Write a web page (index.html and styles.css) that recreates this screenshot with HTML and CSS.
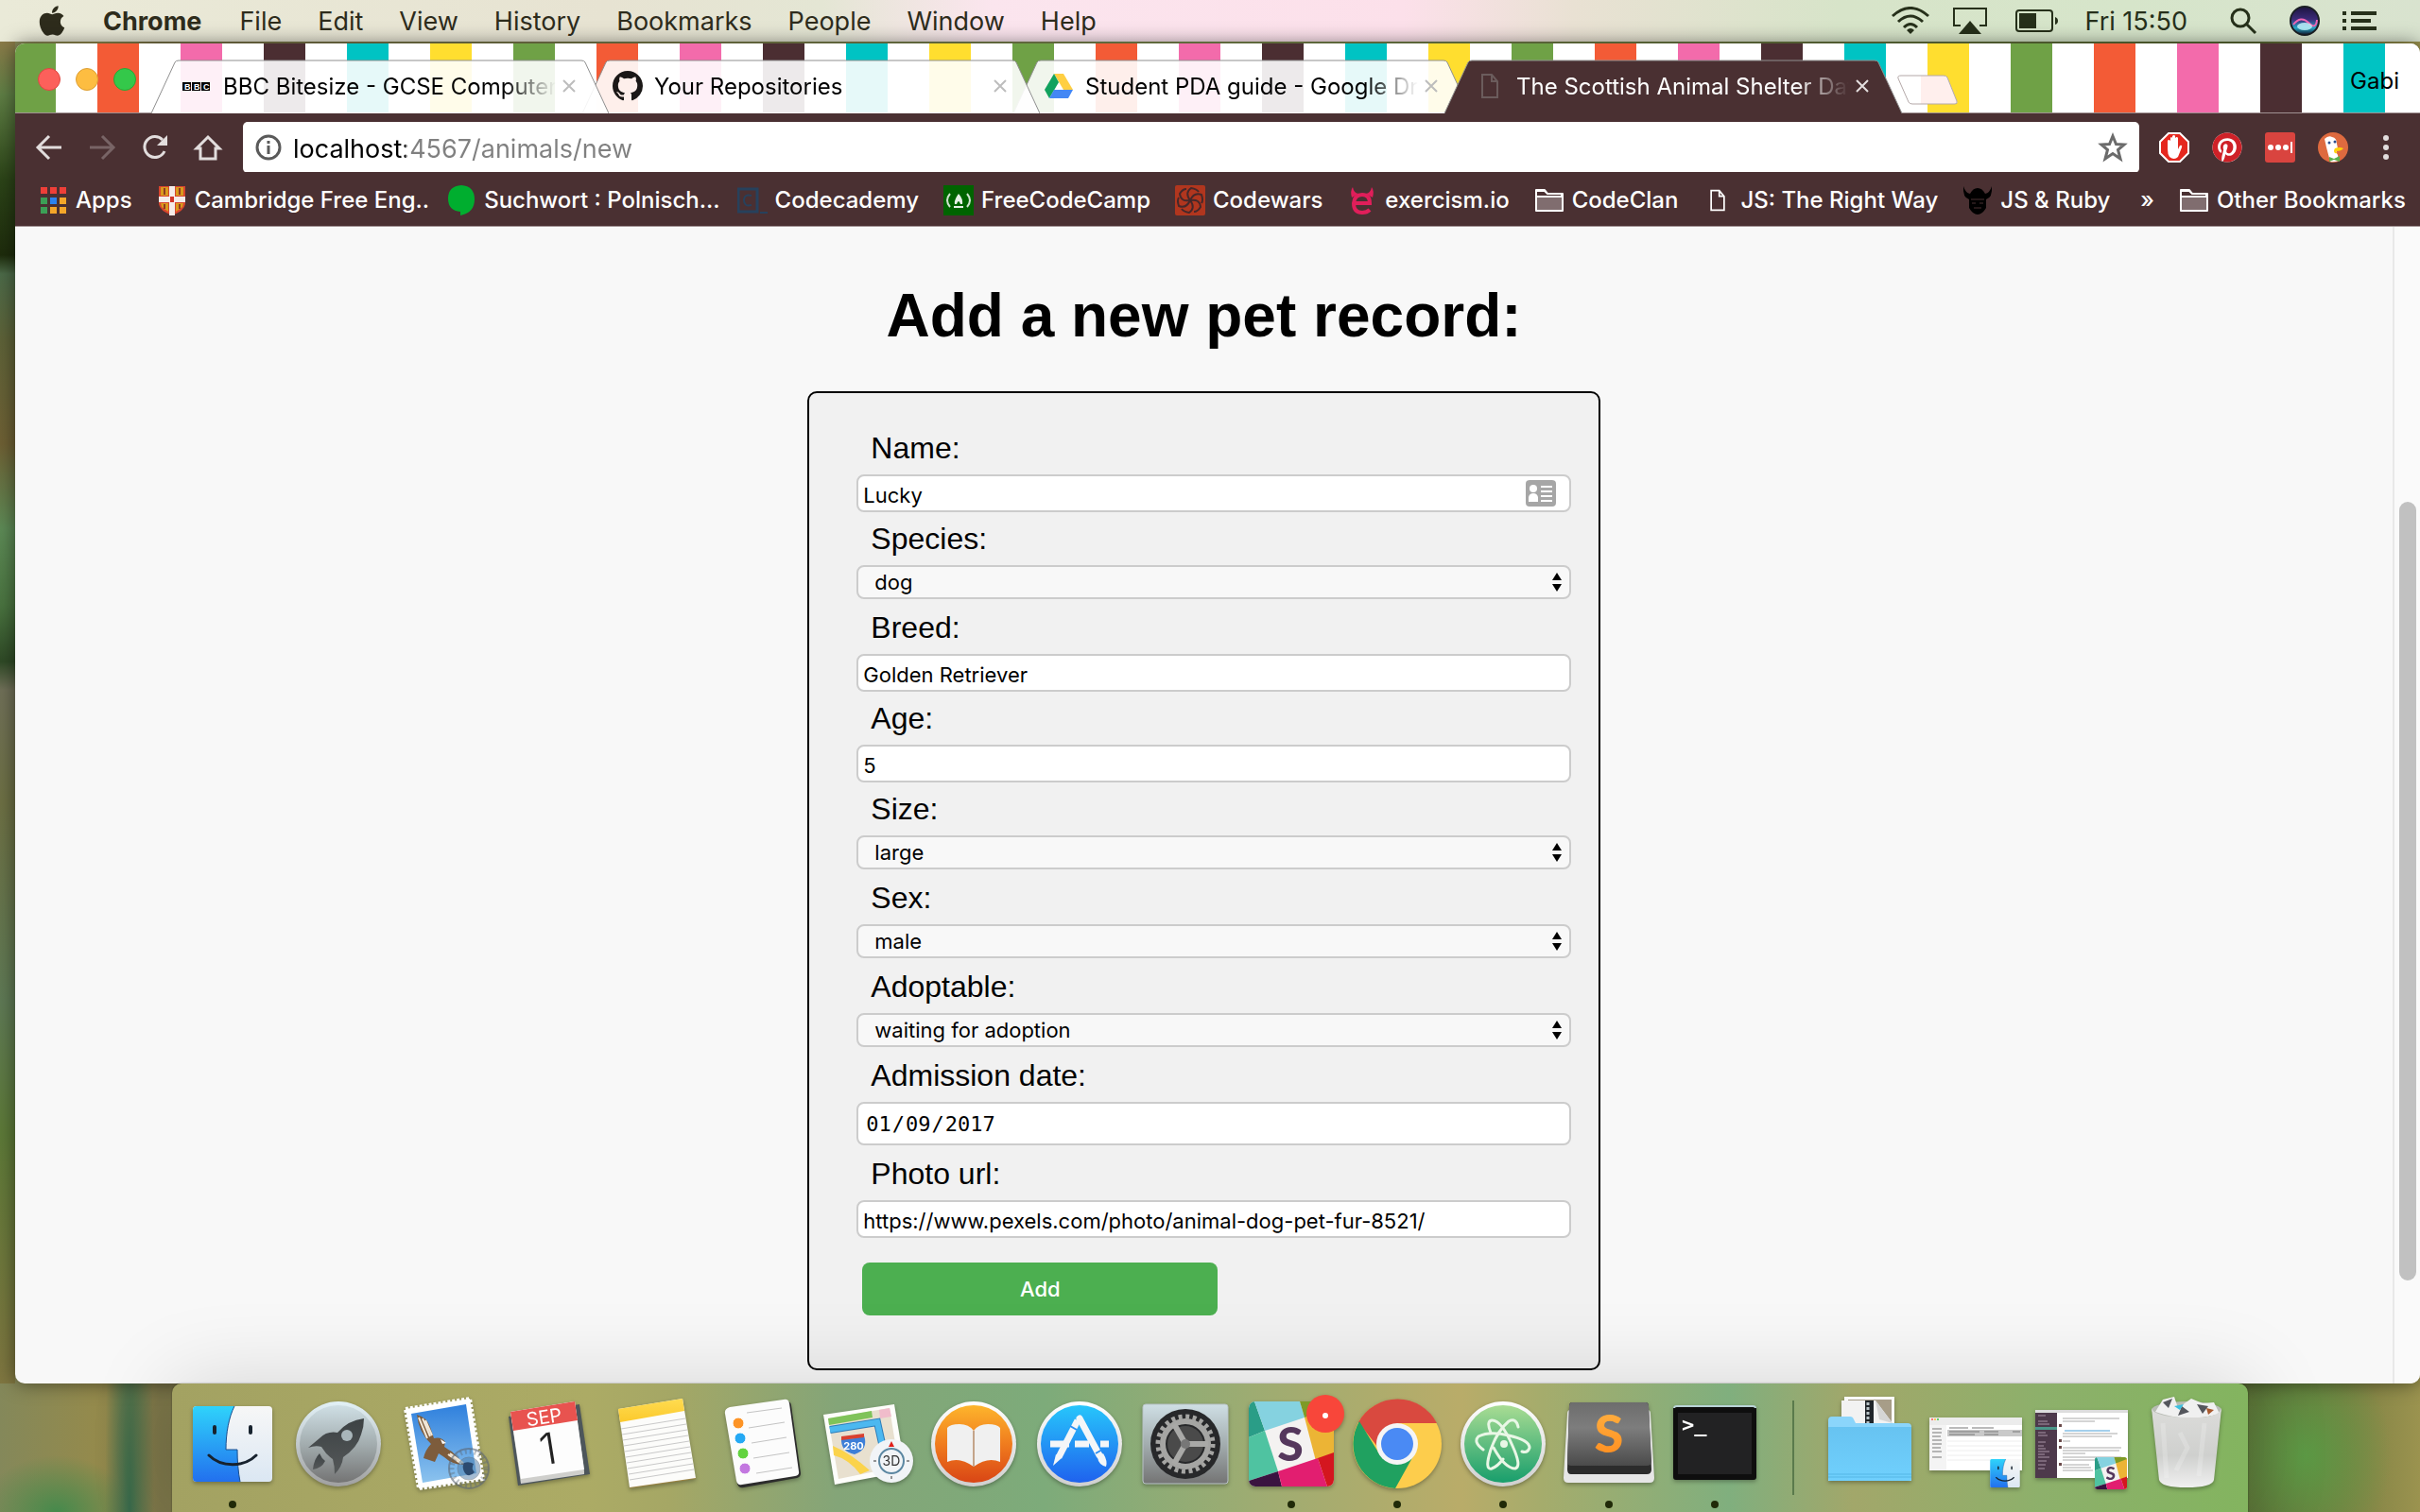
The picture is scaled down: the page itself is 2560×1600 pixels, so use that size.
FILE: index.html
```html
<!DOCTYPE html>
<html lang="en">
<head>
<meta charset="utf-8">
<title>The Scottish Animal Shelter Database</title>
<link rel="stylesheet" href="styles.css">
</head>
<body class="desktop">

<svg class="defs" aria-hidden="true">
  <defs>
    <linearGradient id="gFinderL" x1="0" y1="0" x2="0" y2="1"><stop offset="0" stop-color="#2fd3fb"/><stop offset="1" stop-color="#2270ee"/></linearGradient>
    <linearGradient id="gFinderR" x1="0" y1="0" x2="0" y2="1"><stop offset="0" stop-color="#f7f7f7"/><stop offset="1" stop-color="#dbe7f3"/></linearGradient>
    <linearGradient id="gSteel" x1="0" y1="0" x2="0" y2="1"><stop offset="0" stop-color="#cfdfe5"/><stop offset=".5" stop-color="#a3adaf"/><stop offset="1" stop-color="#747474"/></linearGradient>
    <linearGradient id="gSteelRim" x1="0" y1="0" x2="0" y2="1"><stop offset="0" stop-color="#e2f1f7"/><stop offset="1" stop-color="#a0a0a0"/></linearGradient>
    <linearGradient id="gRim" x1="0" y1="0" x2="0" y2="1"><stop offset="0" stop-color="#ffffff"/><stop offset="1" stop-color="#cfcfcf"/></linearGradient>
    <linearGradient id="gRocket" x1="0" y1="0" x2="0" y2="1"><stop offset="0" stop-color="#3c4244"/><stop offset="1" stop-color="#555859"/></linearGradient>
    <linearGradient id="gSky" x1="0" y1="0" x2="0" y2="1"><stop offset="0" stop-color="#2f80dd"/><stop offset="1" stop-color="#8cc3ee"/></linearGradient>
    <linearGradient id="gYellow" x1="0" y1="0" x2="0" y2="1"><stop offset="0" stop-color="#ffdc51"/><stop offset="1" stop-color="#fbc92c"/></linearGradient>
    <linearGradient id="gBooks" x1="0" y1="0" x2="0" y2="1"><stop offset="0" stop-color="#fdb52c"/><stop offset=".5" stop-color="#f07c1e"/><stop offset="1" stop-color="#d94515"/></linearGradient>
    <linearGradient id="gStore" x1="0" y1="0" x2="0" y2="1"><stop offset="0" stop-color="#27c6fb"/><stop offset="1" stop-color="#1f62ee"/></linearGradient>
    <linearGradient id="gAtom" x1="0" y1="0" x2="0" y2="1"><stop offset="0" stop-color="#a9dc93"/><stop offset="1" stop-color="#189e6c"/></linearGradient>
    <linearGradient id="gSubl" x1="0" y1="0" x2="0" y2="1"><stop offset="0" stop-color="#6d6d6d"/><stop offset=".4" stop-color="#7d7d7d"/><stop offset="1" stop-color="#4b4b4b"/></linearGradient>
    <linearGradient id="gOrange" x1="0" y1="0" x2="0" y2="1"><stop offset="0" stop-color="#ffb545"/><stop offset="1" stop-color="#ff8a1c"/></linearGradient>
    <linearGradient id="gFolder" x1="0" y1="0" x2="0" y2="1"><stop offset="0" stop-color="#67c3f1"/><stop offset="1" stop-color="#70d0fd"/></linearGradient>
    <linearGradient id="gTrash" x1="0" y1="0" x2="0" y2="1"><stop offset="0" stop-color="#dcdcda"/><stop offset=".6" stop-color="#cfd0ce"/><stop offset="1" stop-color="#f0f0f0"/></linearGradient>
    <linearGradient id="gSiri" x1="0" y1="0" x2="0" y2="1"><stop offset="0" stop-color="#1d1440"/><stop offset=".45" stop-color="#3b2a78"/><stop offset=".75" stop-color="#27a9c9"/><stop offset="1" stop-color="#15162c"/></linearGradient>
  </defs>
  <symbol id="finder" viewBox="0 0 84 80">
    <rect width="84" height="80" rx="4" fill="url(#gFinderR)"/>
    <path d="M4 0H44C38 12 35 28 35 46H47C47 58 48 70 50 80H4A4 4 0 0 1 0 76V4A4 4 0 0 1 4 0Z" fill="url(#gFinderL)"/>
    <path d="M44 0C38 12 35 28 35 46H47C47 58 48 70 50 80" fill="none" stroke="#1a4f8f" stroke-width="1"/>
    <path d="M23 22V28M61 22V28" stroke="#17222e" stroke-width="4" stroke-linecap="round"/>
    <path d="M17 52C30 65 54 65 67 52" fill="none" stroke="#17222e" stroke-width="3" stroke-linecap="round"/>
  </symbol>
  <symbol id="slack" viewBox="0 0 90 90">
    <clipPath id="cSlack"><rect width="90" height="90" rx="7"/></clipPath>
    <g clip-path="url(#cSlack)">
      <rect width="90" height="90" fill="#f4f2f1"/>
      <path d="M0 0H6L17 31L0 38Z" fill="#2a9d87"/>
      <path d="M6 0H54L59 17L17 31Z" fill="#85d2e0"/>
      <path d="M54 0H90V14L59 17Z" fill="#7e9a26"/>
      <path d="M59 17L90 5V55L71 63Z" fill="#ecb435"/>
      <path d="M0 38L17 31L31 74L0 84Z" fill="#4fc3a1"/>
      <path d="M0 84L31 74L35 90H0Z" fill="#3a1340"/>
      <path d="M31 74L73 60L83 90H35Z" fill="#e21e70"/>
      <path d="M73 60L90 54V90H83Z" fill="#d4161f"/>
      <text x="44" y="63" class="slack-s">S</text>
    </g>
  </symbol>
  <symbol id="folder" viewBox="0 0 32 26">
    <path d="M2 24V2H11L14 6H30V24Z" fill="#806d6f" stroke="#fff" stroke-width="2" stroke-linejoin="round"/>
    <path d="M2 3H11L14 6H29V9H2Z" fill="#4a3032" stroke="#fff" stroke-width="2"/>
  </symbol>
  <symbol id="page" viewBox="0 0 20 28">
    <path d="M2 2H12L18 9V26H2ZM12 2V9H18" fill="none" stroke="currentColor" stroke-width="2"/>
  </symbol>
  <symbol id="tabshape" viewBox="0 0 484 57">
    <path d="M0 57L25 3Q26 1 29 1H455Q458 1 459 3L484 57" stroke="#8f8f8f" stroke-width="1"/>
  </symbol>
  <symbol id="cross" viewBox="0 0 16 16"><path d="M2 2L14 14M14 2L2 14" stroke="currentColor" stroke-width="2"/></symbol>
  <symbol id="arrows" viewBox="0 0 10 20"><path d="M5 0L10 8H0ZM5 20L0 12H10Z"/></symbol>
</svg>

<header class="menubar">
  <svg class="apple" viewBox="0 0 384 512"><path fill="currentColor" d="M318.7 268.7c-.2-36.7 16.4-64.4 50-84.8-18.8-26.9-47.2-41.7-84.7-44.6-35.5-2.8-74.3 20.7-88.5 20.7-15 0-49.4-19.7-76.4-19.7C63.3 141.2 4 184.8 4 273.5q0 39.3 14.4 81.2c12.8 36.7 59 126.7 107.2 125.2 25.2-.6 43-17.9 75.8-17.9 31.8 0 48.3 17.9 76.4 17.9 48.6-.7 90.4-82.5 102.6-119.3-65.2-30.7-61.7-90-61.7-91.9zm-56.6-164.2c27.3-32.4 24.8-61.9 24-72.5-24.1 1.4-52 16.4-67.9 34.9-17.5 19.8-27.8 44.3-25.6 71.9 26.1 2 49.9-11.4 69.5-34.3z"/></svg>
  <nav class="menus">
    <button class="menu menu-app">Chrome</button>
    <button class="menu">File</button>
    <button class="menu">Edit</button>
    <button class="menu">View</button>
    <button class="menu">History</button>
    <button class="menu">Bookmarks</button>
    <button class="menu">People</button>
    <button class="menu">Window</button>
    <button class="menu">Help</button>
  </nav>
  <div class="status">
    <svg class="wifi" viewBox="0 0 42 30"><g fill="none" stroke="currentColor" stroke-width="3"><path d="M2 10Q21 -7 40 10"/><path d="M8 16Q21 4 34 16"/><path d="M14 22Q21 15 28 22"/></g><path d="M17 25Q21 21 25 25L21 29Z" fill="currentColor"/></svg>
    <svg class="airplay" viewBox="0 0 36 30"><path d="M8 20H1V2H35V20H28" fill="none" stroke="currentColor" stroke-width="2"/><path d="M18 15L30 29H6Z" fill="currentColor"/></svg>
    <svg class="battery" viewBox="0 0 46 24"><rect x="1" y="1" width="38" height="22" rx="3" fill="none" stroke="currentColor" stroke-width="2"/><rect x="4" y="4" width="18" height="16" fill="currentColor"/><path d="M42 8Q45 9 45 12T42 16Z" fill="currentColor"/></svg>
    <span class="clock">Fri 15:50</span>
    <svg class="search" viewBox="0 0 30 30"><circle cx="12" cy="12" r="9" fill="none" stroke="currentColor" stroke-width="3"/><path d="M18 18L28 28" stroke="currentColor" stroke-width="3"/></svg>
    <svg class="siri" viewBox="0 0 32 32"><circle cx="16" cy="16" r="15" fill="url(#gSiri)" stroke="#1b1f24" stroke-width="2"/><path d="M4 20Q12 10 20 18T29 15" fill="none" stroke="#f065b4" stroke-width="2"/><ellipse cx="16" cy="22" rx="8" ry="4" fill="#c9f7ff" opacity=".8"/></svg>
    <svg class="list" viewBox="0 0 36 20"><path d="M0 2H4M0 10H4M0 18H4M9 2H36M9 10H30M9 18H36" stroke="currentColor" stroke-width="4"/></svg>
  </div>
</header>

<section class="browser">
  <div class="tabstrip">
    <div class="lights">
      <button class="light light-close" aria-label="Close window"></button>
      <button class="light light-min" aria-label="Minimise window"></button>
      <button class="light light-max" aria-label="Zoom window"></button>
    </div>
    <div class="tabs">
      <div class="tab tab-1">
        <svg class="tab-bg"><use href="#tabshape"/></svg>
        <svg class="favicon" viewBox="0 0 32 32"><path d="M1 12H10V21H1ZM11 12H20V21H11ZM21 12H30V21H21Z"/><g class="bbc"><text x="3" y="20">B</text><text x="13" y="20">B</text><text x="23" y="20">C</text></g></svg>
        <span class="tab-title">BBC Bitesize - GCSE Computer Science</span>
        <button class="tab-close" aria-label="Close tab"><svg viewBox="0 0 16 16"><use href="#cross"/></svg></button>
      </div>
      <div class="tab tab-2">
        <svg class="tab-bg"><use href="#tabshape"/></svg>
        <svg class="favicon" viewBox="0 0 16 16"><path fill="#1b1817" d="M8 0C3.58 0 0 3.58 0 8c0 3.54 2.29 6.53 5.47 7.59.4.07.55-.17.55-.38 0-.19-.01-.82-.01-1.49-2.01.37-2.53-.49-2.69-.94-.09-.23-.48-.94-.82-1.13-.28-.15-.68-.52-.01-.53.63-.01 1.08.58 1.23.82.72 1.21 1.87.87 2.33.66.07-.52.28-.87.51-1.07-1.78-.2-3.64-.89-3.64-3.95 0-.87.31-1.59.82-2.15-.08-.2-.36-1.02.08-2.12 0 0 .67-.21 2.2.82.64-.18 1.32-.27 2-.27.68 0 1.36.09 2 .27 1.53-1.04 2.2-.82 2.2-.82.44 1.1.16 1.92.08 2.12.51.56.82 1.27.82 2.15 0 3.07-1.87 3.75-3.65 3.95.29.25.54.73.54 1.48 0 1.07-.01 1.93-.01 2.2 0 .21.15.46.55.38A8.013 8.013 0 0016 8c0-4.42-3.58-8-8-8z"/></svg>
        <span class="tab-title">Your Repositories</span>
        <button class="tab-close" aria-label="Close tab"><svg viewBox="0 0 16 16"><use href="#cross"/></svg></button>
      </div>
      <div class="tab tab-3">
        <svg class="tab-bg"><use href="#tabshape"/></svg>
        <svg class="favicon" viewBox="0 0 32 32"><path d="M11 3H21L31 20H21Z" fill="#ffcf42"/><path d="M11 3L16 12L6 29L1 20Z" fill="#11a25e"/><path d="M11 20H31L26 29H6Z" fill="#4387f4"/></svg>
        <span class="tab-title">Student PDA guide - Google Drive</span>
        <button class="tab-close" aria-label="Close tab"><svg viewBox="0 0 16 16"><use href="#cross"/></svg></button>
      </div>
      <div class="tab tab-4 tab-active">
        <svg class="tab-bg"><use href="#tabshape"/></svg>
        <svg class="favicon" viewBox="0 0 32 32"><use href="#page" x="6" y="2" width="20" height="28"/></svg>
        <span class="tab-title">The Scottish Animal Shelter Database</span>
        <button class="tab-close" aria-label="Close tab"><svg viewBox="0 0 16 16"><use href="#cross"/></svg></button>
      </div>
    </div>
    <button class="newtab" aria-label="New tab"><svg viewBox="0 0 66 32"><path d="M5 1H50Q53 1 54 3L64 28Q65 31 62 31H17Q14 31 13 29L2 4Q1 1 5 1Z" fill="#fff"/><path d="M26 1H50Q53 1 54 3L64 28Q65 31 62 31H26Z" fill="#ffefed"/><path d="M5 1H50Q53 1 54 3L64 28Q65 31 62 31H17Q14 31 13 29L2 4Q1 1 5 1Z" fill="none" stroke="#b3a8a8"/></svg></button>
    <button class="profile">Gabi</button>
  </div>

  <div class="toolbar">
    <button class="tool" aria-label="Back"><svg viewBox="0 0 32 32"><path d="M29 16H5M16 4L4 16L16 28" /></svg></button>
    <button class="tool tool-off" aria-label="Forward"><svg viewBox="0 0 32 32"><path d="M3 16H27M16 4L28 16L16 28"/></svg></button>
    <button class="tool" aria-label="Reload"><svg viewBox="0 0 32 32"><path d="M26 20A11 11 0 1 1 24 8"/><path class="solid" d="M29 3V14H18Z"/></svg></button>
    <button class="tool" aria-label="Home"><svg viewBox="0 0 32 32"><path d="M8 17H4L16 5L28 17H24V28H8Z"/></svg></button>
    <div class="omnibox">
      <svg class="info" viewBox="0 0 28 28"><circle cx="14" cy="14" r="12" fill="none" stroke="#5a5a5a" stroke-width="3"/><path d="M14 12V21M14 7V10" stroke="#5a5a5a" stroke-width="3"/></svg>
      <input class="url" type="text" aria-label="Address" value="localhost:4567/animals/new">
      <svg class="star" viewBox="0 0 32 32"><path d="M16 4L19.500 12.500L28 13L21.500 18.500L24 28L16 22.500L8 28L10.500 18.500L4 13L12.500 12.500Z" fill="none" stroke="#6b6b6b" stroke-width="3"/></svg>
    </div>
    <div class="extensions">
      <svg viewBox="0 0 32 32"><path d="M10 1H22L31 10V22L22 31H10L1 22V10Z" fill="#e5281f" stroke="#fff" stroke-width="2"/><path d="M9 18V9Q10 7 12 9V6Q13 4 14 6V4Q16 2 17 4V6Q19 4 20 6V18L22 14Q25 13 24 16L20 26Q16 30 11 26Q9 23 9 18Z" fill="#fff"/></svg>
      <svg viewBox="-8 0 512 512"><circle cx="248" cy="256" r="248" fill="#fff"/><path fill="#cf2128" d="M496 256c0 137-111 248-248 248-25.600 0-50.200-3.900-73.400-11.100 10.100-16.500 25.200-43.500 30.800-65 3-11.600 15.400-59 15.400-59 8.100 15.400 31.700 28.500 56.800 28.500 74.800 0 128.700-68.800 128.700-154.300 0-81.900-66.900-143.200-152.900-143.200-107 0-163.900 71.800-163.900 150.100 0 36.400 19.400 81.700 50.300 96.100 4.700 2.200 7.200 1.200 8.300-3.300.8-3.400 5-20.300 6.900-28.100.6-2.500.3-4.700-1.700-7.100-10.100-12.500-18.300-35.300-18.300-56.600 0-54.700 41.400-107.600 112-107.600 60.900 0 103.600 41.500 103.600 100.900 0 67.100-33.900 113.600-78 113.600-24.300 0-42.600-20.100-36.700-44.800 7-29.500 20.500-61.300 20.500-82.600 0-19-10.200-34.900-31.400-34.900-24.900 0-44.900 25.700-44.900 60.200 0 22 7.400 36.800 7.400 36.800s-24.500 103.800-29 123.200c-5 21.400-3 51.600-.9 71.200C65.400 450.900 0 361.100 0 256 0 119 111 8 248 8s248 111 248 248z"/></svg>
      <svg viewBox="0 0 32 32"><rect width="32" height="32" rx="3" fill="#d9443f"/><g fill="#fff"><circle cx="6" cy="16" r="3"/><circle cx="14" cy="16" r="3"/><circle cx="22" cy="16" r="3"/><path d="M27 10H29V22H27Z"/></g></svg>
      <svg viewBox="0 0 32 32"><circle cx="16" cy="16" r="16" fill="#de6a3f"/><path d="M7 7Q11 3 15 5Q20 6 20 12L21 17Q18 20 21 24L22 30Q17 32 13 31L9 16Z" fill="#fff"/><path d="M18 17Q23 15 27 17Q25 20 19 20Q22 23 18 22Q16 20 18 17Z" fill="#fdd20a"/><circle cx="12" cy="11" r="1.500" fill="#2d4f8e"/><circle cx="18" cy="10" r="1.500" fill="#2d4f8e"/><path d="M12 26L17 28L23 25V31L17 29L12 31Z" fill="#5bb04c"/></svg>
      <button class="more" aria-label="Menu"><svg viewBox="0 0 8 28"><circle cx="4" cy="4" r="3"/><circle cx="4" cy="14" r="3"/><circle cx="4" cy="24" r="3"/></svg></button>
    </div>
  </div>

  <nav class="bookmarks">
    <a class="bm" href="#apps"><svg viewBox="0 0 32 32"><g fill="#ee3f38"><path d="M3 2h7v7H3zM13 2h7v7h-7zM23 2h7v7h-7z"/></g><g fill="#3c9f56"><path d="M3 13h7v7H3zM3 23h7v7H3z"/></g><path d="M13 13h7v7h-7z" fill="#2b82f0"/><path d="M23 13h7v7h-7zM13 23h7v7h-7zM23 23h7v7h-7z" fill="#f4a629"/></svg><span>Apps</span></a>
    <a class="bm bm-cut" href="#cambridge"><svg viewBox="0 0 32 32"><path d="M2 1H30V20Q29 27 16 32Q3 27 2 20Z" fill="#d8452e"/><path d="M4 2H12V11H4ZM20 2H28V11H20ZM4 19H12V28L5 23ZM20 19H28L27 23L20 28Z" fill="#d99b1d"/><path d="M8 3V10M24 3V10M8 20V25M24 20V25" stroke="#8e3a22" stroke-width="2"/><path d="M13 1H19V32H13ZM2 12H30V18H2Z" fill="#f5ece9"/><path d="M14 12H18V18H14Z" fill="#d23428"/></svg><span>Cambridge Free Eng..</span></a>
    <a class="bm bm-cut" href="#suchwort"><svg viewBox="0 0 32 32"><path d="M16 0Q30 1 30 15T15 32V28Q2 27 2 14T16 0Z" fill="#00ae2f"/></svg><span>Suchwort : Polnisch...</span></a>
    <a class="bm" href="#codecademy"><svg viewBox="0 0 32 32"><path d="M1 4H21V28H1Z" fill="none" stroke="#27415c" stroke-width="3"/><path d="M15 11Q7 9 7 16T15 21M24 29H32" fill="none" stroke="#27415c" stroke-width="2"/></svg><span>Codecademy</span></a>
    <a class="bm" href="#freecodecamp"><svg viewBox="0 0 32 32"><path d="M0 0H32V32H0Z" fill="#006400"/><path d="M7 9Q1 16 7 23M25 9Q31 16 25 23" fill="none" stroke="#cfe3cf" stroke-width="2"/><path d="M16 9Q21 14 20 20H18Q17 17 16 17T14 20H12Q11 16 16 9ZM11 22H21V24H11Z" fill="#e6f0e6"/></svg><span>FreeCodeCamp</span></a>
    <a class="bm" href="#codewars"><svg viewBox="0 0 32 32"><rect width="32" height="32" rx="2" fill="#b1361e"/><g fill="none" stroke="#45282a" stroke-width="2"><path d="M16 16Q10 8 17 3Q23 4 25 7"/><path d="M16 16Q20 7 28 10Q30 16 28 19"/><path d="M16 16Q26 14 27 23Q24 28 20 28"/><path d="M16 16Q22 24 15 29Q9 28 7 25"/><path d="M16 16Q12 25 4 22Q2 16 4 13"/><path d="M16 16Q6 18 5 9Q8 4 12 4"/></g></svg><span>Codewars</span></a>
    <a class="bm" href="#exercism"><svg viewBox="0 0 32 32"><path d="M7 19H24Q24 10 16 10T7 19Q7 29 16 29Q21 29 24 26" fill="none" stroke="#e01e5a" stroke-width="4"/><path d="M5 13Q3 6 6 2Q7 8 12 9ZM27 13Q29 6 26 2Q25 8 20 9Z" fill="#e01e5a"/></svg><span>exercism.io</span></a>
    <a class="bm" href="#codeclan"><svg viewBox="0 0 32 26"><use href="#folder"/></svg><span>CodeClan</span></a>
    <a class="bm" href="#rightway"><svg viewBox="0 0 32 32"><use href="#page" x="7" y="4" width="18" height="24"/></svg><span>JS: The Right Way</span></a>
    <a class="bm" href="#jsruby"><svg viewBox="0 0 32 32"><path d="M1 1Q3 8 8 9Q11 3 16 3T24 9Q29 8 31 1Q32 13 25 15V24Q21 31 16 31T7 24V15Q0 13 1 1Z"/><path d="M9 15H23M10 19H14M18 19H22M12 24H20" stroke="#4a3032" stroke-width="1"/></svg><span>JS &amp; Ruby</span></a>
    <button class="overflow" aria-label="More bookmarks">»</button>
    <a class="bm bm-other" href="#other"><svg viewBox="0 0 32 26"><use href="#folder"/></svg><span>Other Bookmarks</span></a>
  </nav>

  <div class="viewport">
    <main class="page">
      <h1 class="title">Add a new pet record:</h1>
      <form class="record">
        <label for="name">Name:</label>
        <div class="control"><input class="text" id="name" type="text" value="Lucky">
          <svg class="card" viewBox="0 0 32 28"><rect width="32" height="28" rx="4" fill="#a6a6a6"/><g fill="#fff"><circle cx="8" cy="9" r="4"/><path d="M3 23V18Q4 14 8 14T13 18V23ZM16 6H28V8H16ZM16 11H28V13H16ZM16 16H28V18H16ZM16 21H28V23H16Z"/></g></svg></div>
        <label for="species">Species:</label>
        <div class="control"><select id="species"><option>dog</option><option>cat</option></select><svg class="arrows" viewBox="0 0 10 20"><use href="#arrows"/></svg></div>
        <label for="breed">Breed:</label>
        <div class="control"><input class="text" id="breed" type="text" value="Golden Retriever"></div>
        <label for="age">Age:</label>
        <div class="control"><input class="text" id="age" type="text" value="5"></div>
        <label for="size">Size:</label>
        <div class="control"><select id="size"><option>large</option><option>small</option></select><svg class="arrows" viewBox="0 0 10 20"><use href="#arrows"/></svg></div>
        <label for="sex">Sex:</label>
        <div class="control"><select id="sex"><option>male</option><option>female</option></select><svg class="arrows" viewBox="0 0 10 20"><use href="#arrows"/></svg></div>
        <label for="adoptable">Adoptable:</label>
        <div class="control"><select id="adoptable"><option>waiting for adoption</option><option>adopted</option></select><svg class="arrows" viewBox="0 0 10 20"><use href="#arrows"/></svg></div>
        <label for="admission">Admission date:</label>
        <div class="control"><input class="date" id="admission" type="date" value="2017-01-09"></div>
        <label for="photo">Photo url:</label>
        <div class="control"><input class="text" id="photo" type="text" value="https://www.pexels.com/photo/animal-dog-pet-fur-8521/"></div>
        <button class="add" type="submit">Add</button>
      </form>
    </main>
    <div class="scrollbar"><div class="thumb"></div></div>
  </div>
</section>

<footer class="dockrow">
  <div class="dock">
    <div class="app app-on"><svg viewBox="0 0 112 112"><use href="#finder" x="14" y="16" width="84" height="80"/></svg></div>
    <div class="app"><svg viewBox="0 0 112 112"><circle cx="56" cy="56" r="45" fill="url(#gSteelRim)"/><circle cx="56" cy="56" r="41" fill="url(#gSteel)"/><path d="M83 29Q66 31 55 44Q44 42 36 50L24 60Q32 57 38 59L43 66Q47 70 50 72Q52 79 52 88Q60 80 61 70Q76 60 80 46Q83 38 83 29Z" fill="url(#gRocket)"/><path d="M36 66Q30 72 29 83Q38 82 42 74Q38 71 36 66Z" fill="url(#gRocket)"/><circle cx="65" cy="47" r="6" fill="#a9b6ba"/></svg></div>
    <div class="app"><svg viewBox="0 0 112 112"><path d="M15 19L83 8L97 93L29 103Z" fill="#fff" stroke="#fff" stroke-width="4" stroke-dasharray="3 2"/><path d="M21 24L79 14L90 87L33 97Z" fill="url(#gSky)"/><path d="M27 25Q38 28 41 38L45 50Q53 48 57 54L56 59Q60 62 64 64L78 78Q66 79 56 70L50 66L46 75L34 71Q36 62 42 56Q29 44 27 25Z" fill="#7d5c3c"/><path d="M29 28L38 50M33 29L41 48M36 31L43 47M60 67L74 77M62 66L76 76" stroke="#f0e6d6" stroke-width="2" fill="none"/><path d="M52 51L58 55L54 56Z" fill="#fff"/><circle cx="82" cy="82" r="21" fill="none" stroke="#5b6673" stroke-width="2" opacity=".6"/><circle cx="82" cy="82" r="18" fill="none" stroke="#5b6673" stroke-width="5" stroke-dasharray="2 3" opacity=".4"/><circle cx="82" cy="82" r="12" fill="#4d7ca8" opacity=".5" stroke="#5b6673"/><path d="M77 76Q82 74 87 77Q84 82 88 86Q82 92 78 87Q74 81 77 76Z" fill="#2c4a70"/></svg></div>
    <div class="app"><svg viewBox="0 0 112 112"><path d="M12 27L87 14L98 88L22 100Z" fill="#4d565b"/><path d="M14 22L82 11L92 85L92 88L25 98Z" fill="#cfcfcc"/><path d="M14 22L82 11L92 83L25 93Z" fill="#fdfdfd"/><path d="M14 22L82 11L85 31L17 42Z" fill="#e8534f"/><g transform="rotate(-9 56 56)"><text x="54" y="34" class="cal-month">SEP</text><text x="53" y="77" class="cal-day">1</text></g></svg></div>
    <div class="app"><svg viewBox="0 0 112 112"><path d="M28 103L98 93V90L28 100Z" fill="#9b8342"/><path d="M16 19L84 8L98 92L28 102Z" fill="#fcfcfa"/><path d="M16 19L84 8L86 21L18 33Z" fill="url(#gYellow)"/><g stroke="#c9c9c9" stroke-width="1"><path d="M19 40L87 29M20 46L88 35M21 52L89 41M22 58L90 47M23 64L91 53M24 70L92 59M25 76L93 65M26 82L94 71M27 88L95 77M28 94L96 83"/></g></svg></div>
    <div class="app"><svg viewBox="0 0 112 112"><path d="M24 19L80 11Q86 10 87 15L97 87Q97 91 93 92L37 102Q31 103 30 98L18 25Q18 20 24 19Z" fill="#2c2c2c"/><path d="M22 17L79 9Q84 8 85 13L95 85Q96 89 91 90L35 99Q30 100 29 95L17 24Q16 19 22 17Z" fill="#fcfcfc"/><g stroke="#fff" stroke-width="1"><circle cx="31" cy="34" r="6" fill="#fd9426"/><circle cx="33" cy="50" r="6" fill="#26a9f4"/><circle cx="36" cy="66" r="6" fill="#62d33f"/><circle cx="38" cy="82" r="6" fill="#c378e0"/></g><path d="M40 23L77 18M42 39L80 33M45 55L82 49M47 71L85 65M50 87L88 81" stroke="#c4c4c4" stroke-width="1"/></svg></div>
    <div class="app"><svg viewBox="0 0 112 112"><path d="M9 25L84 14L96 85L21 99Z" fill="#fdfdfb"/><path d="M14 29L79 18L89 80L25 93Z" fill="#e8e0cf"/><path d="M14 29L60 21L61 28L15 36Z" fill="#7fc35a"/><path d="M68 20L79 18L81 27L69 29Z" fill="#f0bccb"/><path d="M16 41L66 33L72 60" fill="none" stroke="#2c7cb8" stroke-width="8"/><path d="M16 41L66 33L72 60" fill="none" stroke="#4cb8f0" stroke-width="6"/><path d="M19 58Q38 66 58 84L48 88Q36 72 20 68Z" fill="#fbd34b"/><path d="M28 50Q40 52 52 47Q57 62 42 67Q27 64 28 50Z" fill="#3d7fd8"/><path d="M28 48L52 45V49L28 52Z" fill="#d8402f"/><text x="41" y="62" class="route">280</text><circle cx="81" cy="74" r="23" fill="#f1f4f7"/><circle cx="81" cy="74" r="13" fill="none" stroke="#5b87a2" stroke-width="2"/><path d="M81 53L84 59H78Z" fill="#e0201c"/><path d="M81 90V93M62 74H65M97 74H100" stroke="#333" stroke-width="1"/><text x="81" y="79" class="map3d">3D</text></svg></div>
    <div class="app"><svg viewBox="0 0 112 112"><circle cx="56" cy="56" r="45" fill="url(#gRim)"/><circle cx="56" cy="56" r="41" fill="url(#gBooks)"/><path d="M28 39Q31 35 41 35T56 42Q61 35 71 35T84 39V75Q71 69 56 80Q41 69 28 75Z" fill="#f0f0f0"/><path d="M56 42V80" stroke="#c4a48a" stroke-width="2"/></svg></div>
    <div class="app"><svg viewBox="0 0 112 112"><circle cx="56" cy="56" r="45" fill="url(#gRim)"/><circle cx="56" cy="56" r="41" fill="url(#gStore)"/><g stroke="#f4f6f8"><path d="M25 56H45M51 56H66M78 56H87" stroke-width="7"/><path d="M54 31L34 70" stroke-width="7"/><path d="M56 29L77 68" stroke-width="7" stroke-linecap="round"/></g><path d="M31 67L37 71L28 79ZM75 70L81 66Q86 74 84 80Q76 78 75 70Z" fill="#f4f6f8"/><path d="M46 37L53 41M73 66L80 62" stroke="#2b8ef4" stroke-width="2"/></svg></div>
    <div class="app"><svg viewBox="0 0 112 112"><rect x="11" y="14" width="90" height="84" rx="3" fill="url(#gSteel)" stroke="#b9c4c8"/><circle cx="56" cy="56" r="37" fill="#27282a"/><circle cx="56" cy="56" r="29" fill="none" stroke="#a5a5a3" stroke-width="5" stroke-dasharray="4 3.590"/><circle cx="56" cy="56" r="24" fill="none" stroke="#a5a5a3" stroke-width="6"/><circle cx="56" cy="56" r="19" fill="#4a4a4a"/><path d="M56 56H80M56 56L44 35M56 56L44 77" stroke="#a9a9a7" stroke-width="6"/><circle cx="56" cy="56" r="5" fill="#777"/></svg></div>
    <div class="app app-on"><svg viewBox="0 0 112 112"><use href="#slack" x="11" y="11" width="90" height="90"/><circle cx="92" cy="24" r="20" fill="#f8463a"/><circle cx="92" cy="26" r="3" fill="#fff"/></svg></div>
    <div class="app app-on"><svg viewBox="0 0 112 112"><circle cx="56" cy="56" r="47" fill="#fdcd4c"/><path d="M15 33A47 47 0 0 1 98 34H56V60H36Z" fill="#d9493f"/><path d="M16 32A47 47 0 0 0 54 103L74 67L38 68Z" fill="#20a160"/><circle cx="56" cy="56" r="22" fill="#f5f5f5"/><circle cx="56" cy="56" r="17" fill="#4a8af4"/></svg></div>
    <div class="app app-on"><svg viewBox="0 0 112 112"><circle cx="56" cy="56" r="45" fill="url(#gRim)"/><circle cx="56" cy="56" r="41" fill="url(#gAtom)"/><g fill="none" stroke="#e9f7e6" stroke-width="3" stroke-linecap="round"><path d="M72 38Q70 28 62 32Q50 42 43 62Q36 84 44 82Q50 80 56 72"/><path d="M43 44Q38 32 44 31Q54 30 66 58Q76 80 69 82Q58 82 46 60"/><path d="M35 62Q24 54 30 48Q42 42 62 47Q84 52 84 60Q82 66 76 64"/></g><circle cx="57" cy="56" r="4" fill="#e9f7e6"/></svg></div>
    <div class="app app-on"><svg viewBox="0 0 112 112"><path d="M15 20H97Q100 20 100 24L104 92Q104 97 99 97H13Q8 97 8 92L12 24Q12 20 15 20Z" fill="#e6e6e6"/><path d="M17 12H95Q98 12 98 16L101 83Q101 88 96 88H16Q12 88 12 83L14 16Q14 12 17 12Z" fill="#2c2c2c"/><path d="M17 12H95Q98 12 98 16L101 74Q101 79 96 79H16Q12 79 12 74L14 16Q14 12 17 12Z" fill="url(#gSubl)"/><text x="56" y="65" class="subl-s">S</text></svg></div>
    <div class="app app-on"><svg viewBox="0 0 112 112"><rect x="12" y="16" width="88" height="78" rx="3" fill="#0e0e0e"/><path d="M13 18Q13 16 16 16H96Q99 16 99 18" fill="none" stroke="#b9d3d6" stroke-width="2"/><rect x="17" y="23" width="78" height="65" fill="#222223"/><text x="21" y="43" class="prompt">&gt;_</text></svg></div>
    <div class="divider"></div>
    <div class="app"><svg viewBox="0 0 112 112"><path d="M29 6H82V40H29Z" fill="#fafafa"/><path d="M33 9H79V36H33Z" fill="#a79d88"/><path d="M26 10H62L80 34V44H26Z" fill="#f2f2f2"/><path d="M51 10H60V36H51Z" fill="#20252a"/><path d="M54 12V34" stroke="#b9c4c8" stroke-width="3" stroke-dasharray="3 2"/><path d="M62 10L80 34L66 30Z" fill="#d5d5d5"/><path d="M12 31Q12 27 16 27H35Q38 27 39 30L41 34H96Q100 34 100 38V95H12Z" fill="#8bd5fb"/><path d="M12 38H100V92Q100 95 97 95H15Q12 95 12 92Z" fill="url(#gFolder)"/><path d="M12 88H100M12 91H100" stroke="#55b7e6" stroke-width="1"/></svg></div>
    <div class="app"><svg viewBox="0 0 112 112"><rect x="7" y="28" width="98" height="56" fill="#fff"/><path d="M7 28H105V36H7Z" fill="#ececec"/><path d="M7 36H25V84H7Z" fill="#f4f4f4"/><path d="M26 41H105V48H26Z" fill="#c9c9c9"/><path d="M28 39H48M52 39H75M28 43H60M28 46H55M65 43H80M65 46H80M95 43H103M10 40H20M10 44H20M10 48H19M10 52H20M10 56H20M10 60H19M10 64H20M10 70H20" stroke="#777" stroke-width="1"/><path d="M26 53H105M26 58H105M26 63H105M26 68H105M26 73H105" stroke="#eee"/><g><circle cx="10" cy="30" r="1" fill="#f55"/><circle cx="13" cy="30" r="1" fill="#fb3"/><circle cx="16" cy="30" r="1" fill="#3c4"/></g><use href="#finder" x="71" y="72" width="32" height="30"/></svg></div>
    <div class="app"><svg viewBox="0 0 112 112"><rect x="7" y="20" width="98" height="72" fill="#fff"/><path d="M7 20H105V23H7Z" fill="#ddd"/><path d="M7 23H30V92H7Z" fill="#4d394b"/><path d="M7 38H30V41H7Z" fill="#4c9689"/><path d="M10 26H18M10 32H20M10 35H22M10 44H18M10 47H20M10 54H18M10 58H16M10 61H18M10 64H22M10 67H17M10 70H22M10 74H19M10 78H18M10 82H17" stroke="#a995a7" stroke-width="1"/><path d="M36 29H96M36 32H70M36 45H94M36 48H88M36 53H44M36 60H98M36 63H96M36 66H60M36 70H98M36 73H95M36 78H64M36 81H66M36 84H68" stroke="#aaa" stroke-width="1"/><path d="M38 42H86" stroke="#4aa0d8" stroke-width="1"/><path d="M32 35H35V38H32ZM32 51H35V54H32ZM32 58H35V61H32ZM32 76H35V79H32Z" fill="#6a4a4a"/><use href="#slack" x="70" y="70" width="34" height="34"/></svg></div>
    <div class="app"><svg viewBox="0 0 112 112"><ellipse cx="55" cy="20" rx="37" ry="9" fill="#b9bdb5"/><path d="M22 22L30 9L42 6L46 18L60 8L72 13L84 12L90 24Q56 34 22 22Z" fill="#f0f0f0"/><path d="M30 12L40 8L36 18ZM66 14L78 16L72 24ZM50 16L58 22L46 26Z" fill="#54565c"/><path d="M42 16L52 14L48 20Z" fill="#3cc0e0"/><path d="M76 18L84 20L78 25Z" fill="#a8592e"/><path d="M18 18Q20 27 55 28T92 18L84 94Q82 102 55 102T26 94Z" fill="url(#gTrash)"/><path d="M30 34L34 92M48 44L56 60L44 84M74 34L68 90" stroke="#fff" stroke-width="5" fill="none" opacity=".2"/></svg></div>
  </div>
</footer>
</body>
</html>
```
FILE: styles.css
```css
* { box-sizing: border-box; }

:root {
  --ui: Inter, "Liberation Sans", sans-serif;
  --theme: #4a3032;
}

.desktop {
  margin: 0;
  height: 100vh;
  overflow: hidden;
  display: flex;
  flex-direction: column;
  font-family: var(--ui);
  background:
    linear-gradient(180deg, #8a7a48 44px, #5f7f45 100px, #2c4418 190px, #1e2c0c 270px, #4c6a48 290px, #5e6238 360px, #6e6034 470px, #5d8a56 560px, #4a7440 640px, #2f4a26 700px, #707058 730px, #6d7044 850px, #5f7a55 1060px, #5d7a38 1200px, #7f7640 100%) 0 0 / 16px 1464px no-repeat,
    radial-gradient(ellipse 26px 400px at 137px 100%, #37694a 0, rgba(55, 105, 74, 0) 100%),
    radial-gradient(ellipse 80px 60px at 60px 100%, #468a4c 0, rgba(70, 138, 76, 0) 100%),
    radial-gradient(ellipse 90px 120px at 2440px 1540px, #5c9a45 0, rgba(92, 154, 69, 0) 100%),
    linear-gradient(90deg, #84885a 0, #948a4c 100px, #7a7448 170px, #7d8a50 50%, #5a6a34 2390px, #9b934f 2560px);
}

button {
  border: 0;
  padding: 0;
  background: none;
  font: inherit;
  color: inherit;
}

svg { display: block; flex: none; }
.defs { position: absolute; width: 0; height: 0; }

/* menu bar */
.menubar {
  flex: none;
  height: 44px;
  padding: 0 46px 0 41px;
  display: flex;
  align-items: center;
  font-size: 27px;
  color: #2e2c1c;
  background: linear-gradient(90deg, #eaead8 0, #e7e3d2 25%, #e4e6d4 34%, #fbe5ee 41%, #fce0ea 58%, #e9e1d3 65%, #d7e4c9 76%, #d6e5ca 88%, #d9e3cf 100%);
}
.apple { width: 28px; height: 36px; margin-right: 40px; }
.menus { display: flex; gap: 38px; }
.menu-app { font-weight: 700; margin-right: 2px; }
.status { margin-left: auto; display: flex; align-items: center; color: #26301a; }
.wifi { width: 42px; height: 30px; margin-right: 24px; }
.airplay { width: 36px; height: 30px; margin-right: 30px; }
.battery { width: 46px; height: 24px; margin-right: 28px; }
.clock { margin-right: 44px; }
.search { width: 30px; height: 30px; margin-right: 34px; }
.siri { width: 32px; height: 32px; margin-right: 24px; }
.list { width: 36px; height: 20px; }

/* browser window */
.browser {
  flex: 1;
  min-height: 0;
  margin: 2px 0 0 16px;
  display: flex;
  flex-direction: column;
  border-radius: 10px;
  overflow: hidden;
  background: #f8f8f8;
  box-shadow: 0 0 20px rgba(0, 0, 0, .5);
}

.tabstrip {
  flex: none;
  height: 74px;
  display: flex;
  border-bottom: 1px solid #a09192;
  background: repeating-linear-gradient(90deg,
    #6fa146 0 43px, #fff 43px 87px,
    #f35b36 87px 131px, #fff 131px 175px,
    #f36bab 175px 219px, #fff 219px 263px,
    #4b2e32 263px 307px, #fff 307px 351px,
    #00c3c3 351px 395px, #fff 395px 439px,
    #ffde2f 439px 483px, #fff 483px 527px,
    #6fa146 527px 528px);
}
.lights { flex: none; width: 144px; padding: 26px 0 0 24px; display: flex; gap: 16px; }
.light { width: 24px; height: 24px; border-radius: 50%; border: 1px solid; }
.light-close { background: #fc605b; border-color: #de4741; }
.light-min { background: #fdbd41; border-color: #dd9e33; }
.light-max { background: #34c84a; border-color: #27a935; }

.tabs { display: flex; padding-top: 17px; }
.tab {
  position: relative;
  width: 484px;
  padding: 0 32px;
  display: flex;
  align-items: center;
  gap: 12px;
  font-size: 24px;
  color: #000;
}
.tab + .tab { margin-left: -28px; }
.tab-1 { z-index: 3; }
.tab-2 { z-index: 2; }
.tab-3 { z-index: 1; }
.tab-active { z-index: 4; color: #fff; }
.tab-bg { position: absolute; inset: 0; width: 100%; height: 57px; z-index: -1; fill: rgba(255, 255, 255, .9); }
.tab-active .tab-bg { fill: var(--theme); }
.favicon { width: 32px; height: 32px; }
.tab-active .favicon { color: #6b5c5c; }
.tab-title {
  flex: 1;
  margin-right: -8px;
  overflow: hidden;
  white-space: nowrap;
  mask-image: linear-gradient(90deg, #000 calc(100% - 56px), transparent);
}
.tab-close { width: 16px; height: 16px; margin: 0 2px; color: #bdbdbd; }
.tab-active .tab-close { color: #e4dfdf; }
.bbc { font: 700 9px "Liberation Sans", sans-serif; fill: #fff; }
.newtab { width: 66px; height: 32px; margin: 33px 0 0 -6px; }
.profile { margin: 6px 22px 0 auto; align-self: center; font-size: 24px; color: #000; }

/* toolbar */
.toolbar {
  flex: none;
  height: 62px;
  padding: 10px 20px 0;
  display: flex;
  align-items: center;
  gap: 24px;
  background: var(--theme);
}
.tool { width: 32px; height: 32px; }
.tool svg { fill: none; stroke: #e2dddd; stroke-width: 3; }
.tool .solid { fill: #e2dddd; stroke: none; }
.tool-off { opacity: .3; }
.omnibox {
  flex: 1;
  height: 54px;
  margin: 0 -3px;
  padding: 0 12px 0 13px;
  display: flex;
  align-items: center;
  gap: 12px;
  background: #fff;
  border-radius: 5px;
}
.info { width: 28px; height: 28px; }
.star { width: 32px; height: 32px; }
.url {
  flex: 1;
  border: 0;
  padding: 2px 0 0;
  outline: 0;
  font: 27px var(--ui);
  color: transparent;
  background: linear-gradient(90deg, #000 119px, #808080 119px) text;
}
.extensions { display: flex; align-items: center; gap: 24px; margin-right: 12px; }
.extensions svg { width: 32px; height: 32px; }
.more { width: 8px; height: 28px; margin-left: 12px; }
.extensions .more svg { width: 8px; height: 28px; fill: #e2dddd; }

/* bookmarks bar */
.bookmarks {
  flex: none;
  height: 58px;
  padding: 2px 18px 0 24px;
  display: flex;
  align-items: center;
  gap: 26px;
  background: var(--theme);
  border-bottom: 1px solid #a09192;
  font-size: 24px;
  font-weight: 500;
  color: #fff;
}
.bm { display: flex; align-items: center; gap: 8px; white-space: nowrap; color: inherit; text-decoration: none; }
.bm svg { width: 32px; height: 32px; }
.bm-cut { margin-right: -8px; }
.overflow { margin-left: 6px; }
.bm-other { margin-left: auto; }

/* web page */
.viewport {
  flex: 1;
  min-height: 0;
  display: flex;
}
.page { flex: 1; padding-top: 57px; overflow: hidden; }
.title {
  margin: 0 0 43px;
  text-align: center;
  font: 700 64px/74px "Liberation Sans", sans-serif;
  color: #000;
}
.record {
  width: calc(100% / 3);
  margin: 0 auto;
  padding: 30px 29px 56px 50px;
  border: 2px solid #000;
  border-radius: 10px;
  background: #f1f1f1;
}
.record label {
  display: block;
  padding-left: 15px;
  font: 32px/56px "Liberation Sans", sans-serif;
}
.control { display: grid; align-items: center; }
.control > * { grid-area: 1 / 1; }
.control .card { justify-self: end; width: 32px; height: 28px; margin-right: 16px; }
.control .arrows { justify-self: end; width: 10px; height: 20px; margin: 0 10px 2px 0; pointer-events: none; }
.text, .date, .record select {
  width: 100%;
  appearance: none;
  border: 2px solid #ccc;
  border-radius: 8px;
  font: 22px var(--ui);
  color: #000;
  background: #fff;
  outline: 0;
}
.text { height: 40px; padding: 3px 5px 0; }
.record select { height: 36px; padding: 0 17px; margin-bottom: 2px; background: #f8f8f8; }
.date { height: 46px; padding: 0 7px; margin-bottom: 2px; font-family: "DejaVu Sans Mono", monospace; }
.date::-webkit-calendar-picker-indicator { display: none; }
.add {
  display: block;
  width: 376px;
  height: 56px;
  margin: 26px 0 0 6px;
  border-radius: 8px;
  background: #4caf50;
  font: 500 22px var(--ui);
  color: #fff;
}
.scrollbar { width: 29px; padding: 291px 4px 0 5px; border-left: 2px solid #e8e8e8; background: #fafafa; }
.thumb { height: 824px; border-radius: 9px; background: #c1c1c1; }

/* dock */
.dockrow { position: relative; flex: none; height: 136px; display: flex; justify-content: center; }
.dock {
  display: flex;
  padding: 8px 8px 0;
  border-radius: 10px 10px 0 0;
  background: linear-gradient(90deg, #a3a262 0, #acab65 20%, #a5a765 24%, #84a578 32%, #7dab7a 42%, #9dac72 52%, #b9ac69 62%, #a5ac6c 66%, #80af7e 75%, #a2a76a 81%, #8db06b 90%, #83b45f 100%);
  box-shadow: 0 0 2px rgba(0, 0, 0, .4), 0 0 90px rgba(0, 0, 0, .15);
}
.app { width: 112px; display: flex; flex-direction: column; align-items: center; gap: 4px; }
.app svg { width: 112px; height: 112px; filter: drop-shadow(0 2px 2px rgba(0, 0, 0, .3)); }
.app-on::after { content: ""; width: 8px; height: 8px; border-radius: 50%; background: #202a08; }
.divider { width: 2px; height: 100px; margin: 10px 24px 0 26px; background: #5a7a4c; }

.slack-s { font: 900 50px Lato, sans-serif; fill: #55375c; text-anchor: middle; }
.subl-s { font: 900 56px Lato, sans-serif; fill: url(#gOrange); text-anchor: middle; }
.cal-month { font: 400 20px Inter, sans-serif; fill: #fff; text-anchor: middle; }
.cal-day { font: 300 46px Inter, sans-serif; fill: #222; text-anchor: middle; }
.route { font: 700 11px Inter, sans-serif; fill: #fff; text-anchor: middle; }
.map3d { font: 400 14px Inter, sans-serif; fill: #333; text-anchor: middle; }
.prompt { font: 700 22px "DejaVu Sans Mono", monospace; fill: #fff; }
```
